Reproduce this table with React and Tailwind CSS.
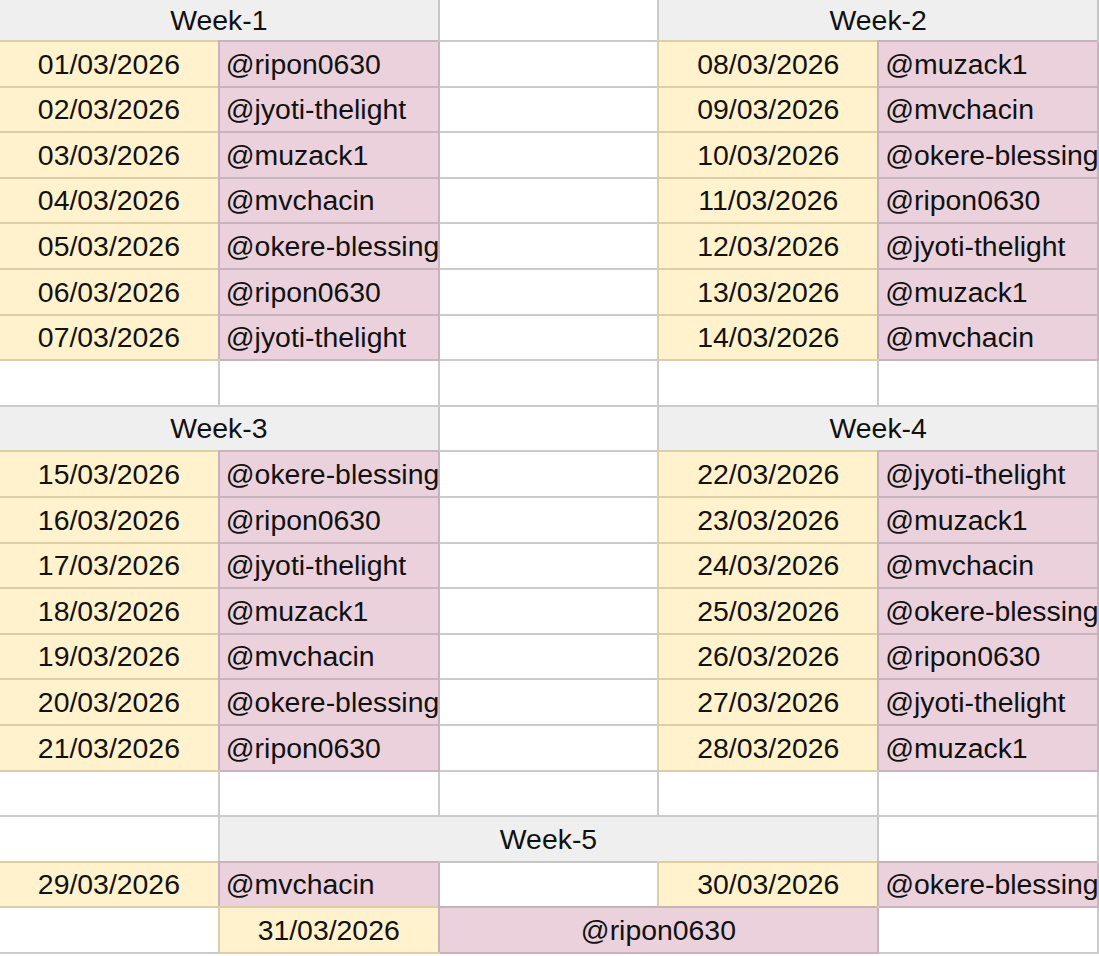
import React from "react";

const weeks = [
  {
    left: "Week-1",
    right: "Week-2",
    rows: [
      ["01/03/2026", "@ripon0630", "08/03/2026", "@muzack1"],
      ["02/03/2026", "@jyoti-thelight", "09/03/2026", "@mvchacin"],
      ["03/03/2026", "@muzack1", "10/03/2026", "@okere-blessing"],
      ["04/03/2026", "@mvchacin", "11/03/2026", "@ripon0630"],
      ["05/03/2026", "@okere-blessing", "12/03/2026", "@jyoti-thelight"],
      ["06/03/2026", "@ripon0630", "13/03/2026", "@muzack1"],
      ["07/03/2026", "@jyoti-thelight", "14/03/2026", "@mvchacin"],
    ],
  },
  {
    left: "Week-3",
    right: "Week-4",
    rows: [
      ["15/03/2026", "@okere-blessing", "22/03/2026", "@jyoti-thelight"],
      ["16/03/2026", "@ripon0630", "23/03/2026", "@muzack1"],
      ["17/03/2026", "@jyoti-thelight", "24/03/2026", "@mvchacin"],
      ["18/03/2026", "@muzack1", "25/03/2026", "@okere-blessing"],
      ["19/03/2026", "@mvchacin", "26/03/2026", "@ripon0630"],
      ["20/03/2026", "@okere-blessing", "27/03/2026", "@jyoti-thelight"],
      ["21/03/2026", "@ripon0630", "28/03/2026", "@muzack1"],
    ],
  },
];

// plain empty cell, only the sheet grid lines
const Blank = ({ span = "" }) => (
  <div className={`border-r-2 border-b-2 border-[#cbcbcb] ${span}`} />
);

const Head = ({ children, span = "col-span-2" }) => (
  <div className={`${span} flex items-center justify-center bg-[#efefef] border-r-2 border-b-2 border-[#c6c6c6]`}>
    {children}
  </div>
);

const DateCell = ({ children }) => (
  <div className="relative z-10 flex items-center justify-center bg-[#fff2cc] border-r-2 border-b-2 border-[#dccfa8] shadow-[-2px_-2px_0_0_#dccfa8]">
    {children}
  </div>
);

const NameCell = ({ children, center = false, span = "" }) => (
  <div
    className={`relative z-10 flex items-center whitespace-nowrap bg-[#ead1dc] border-r-2 border-b-2 border-[#c8b3bc] shadow-[-2px_-2px_0_0_#c8b3bc] ${span} ${
      center ? "justify-center" : "pl-[6px]"
    }`}
  >
    {children}
  </div>
);

export default function App() {
  return (
    <div className="w-[1099px] h-[956px] overflow-hidden bg-white">
      <div
        className="grid grid-cols-5 grid-rows-[42px_repeat(20,45.6px)] w-[1099px] text-[28.4px] leading-none text-[#111]"
        style={{ fontFamily: '"Liberation Sans", Arial, sans-serif' }}
      >
        {weeks.map((wk, wi) => (
          <React.Fragment key={wi}>
            <Head>{wk.left}</Head>
            <Blank />
            <Head>{wk.right}</Head>
            {wk.rows.map((r, i) => (
              <React.Fragment key={i}>
                <DateCell>{r[0]}</DateCell>
                <NameCell>{r[1]}</NameCell>
                <Blank />
                <DateCell>{r[2]}</DateCell>
                <NameCell>{r[3]}</NameCell>
              </React.Fragment>
            ))}
            <Blank />
            <Blank />
            <Blank />
            <Blank />
            <Blank />
          </React.Fragment>
        ))}

        <Blank />
        <Head span="col-span-3">Week-5</Head>
        <Blank />

        <DateCell>29/03/2026</DateCell>
        <NameCell>@mvchacin</NameCell>
        <Blank />
        <DateCell>30/03/2026</DateCell>
        <NameCell>@okere-blessing</NameCell>

        <Blank />
        <DateCell>31/03/2026</DateCell>
        <NameCell center span="col-span-2">@ripon0630</NameCell>
        <Blank />
      </div>
    </div>
  );
}
